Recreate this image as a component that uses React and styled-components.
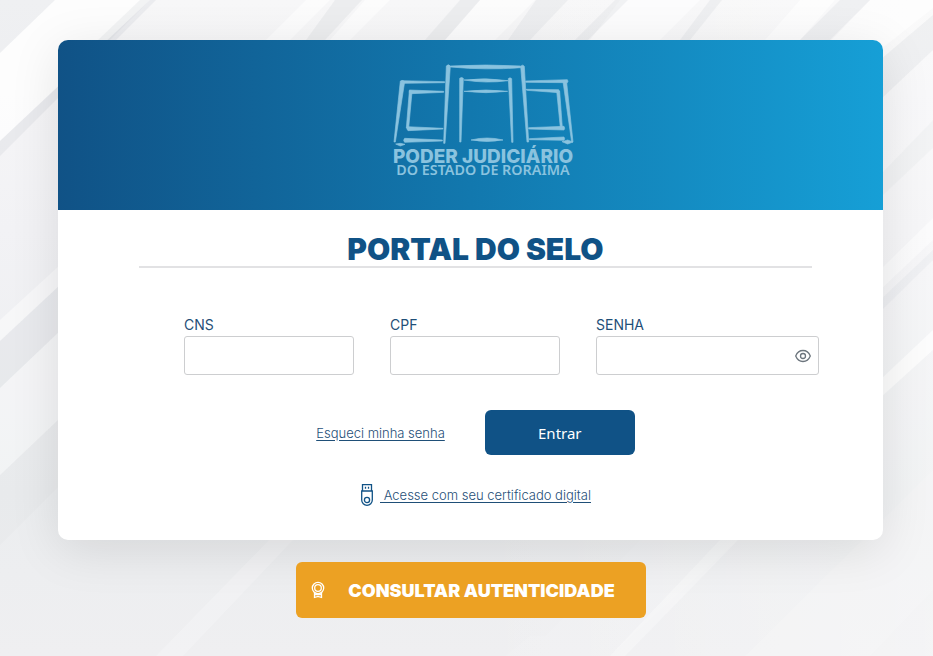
import React, { useState } from "react";
import styled, { createGlobalStyle } from "styled-components";

const NAVY = "#105286";

const GlobalStyle = createGlobalStyle`
  *, *::before, *::after { box-sizing: border-box; }
  body {
    margin: 0;
    background: #eeeff1;
    font-family: Inter, "Open Sans", sans-serif;
  }
`;

const Page = styled.div`
  position: relative;
  isolation: isolate;
  min-height: 100vh;
  padding: 40px 50px 38px 58px;
  display: flex;
  flex-direction: column;
  align-items: center;
  gap: 22px;
`;

const Backdrop = styled.svg`
  position: absolute;
  inset: 0;
  z-index: -1;
  width: 100%;
  height: 100%;
`;

const Card = styled.main`
  width: 100%;
  max-width: 960px;
  border-radius: 10px;
  background: #fff;
  box-shadow: 0 10px 50px rgba(0, 0, 0, 0.1);
`;

const Banner = styled.header`
  height: 170px;
  padding: 24px 0 0 25px;
  display: flex;
  justify-content: center;
  align-items: flex-start;
  border-radius: 10px 10px 0 0;
  background: linear-gradient(90deg, ${NAVY} 0%, #1278ae 50%, #169fd6 100%);
`;

const Logo = styled.svg`
  width: 180px;
  height: 112px;
  overflow: visible;
  fill: #8ac3df;
`;

const Body = styled.div`
  padding: 22px 0 33px 10px;
  display: flex;
  flex-direction: column;
  align-items: center;
`;

const Title = styled.h1`
  width: calc(100% - 142px);
  margin: 0;
  border-bottom: 2px solid #e2e2e4;
  color: ${NAVY};
  font-size: 30px;
  font-weight: 900;
  line-height: 34px;
  text-align: center;
`;

const LoginForm = styled.form`
  width: 100%;
  padding-top: 46px;
  display: flex;
  flex-direction: column;
  align-items: center;
  gap: 35px;
`;

const Fields = styled.div`
  width: 100%;
  padding: 0 64px 0 116px;
  display: grid;
  grid-template-columns: 170fr 170fr 223fr;
  gap: 36px;
`;

const Field = styled.div`
  min-width: 0;
  display: flex;
  flex-direction: column;
`;

const Label = styled.label`
  color: #1f4f78;
  font-size: 14px;
  line-height: 22px;
`;

const InputFrame = styled.div`
  height: 39px;
  display: flex;
  align-items: center;
  border: 1px solid #cdced0;
  border-radius: 3px;
  background: #fff;

  &:focus-within { border-color: ${NAVY}; }
`;

const Input = styled.input`
  flex: 1;
  min-width: 0;
  height: 100%;
  padding: 0 10px;
  border: 0;
  outline: 0;
  background: transparent;
  color: #333;
  font: inherit;
  font-size: 14px;
`;

const RevealButton = styled.button`
  width: 30px;
  height: 30px;
  padding: 0;
  display: grid;
  place-items: center;
  border: 0;
  background: transparent;
  color: #6c757d;
  cursor: pointer;
`;

const Actions = styled.div`
  display: flex;
  align-items: center;
  gap: 40px;
`;

const TextLink = styled.a`
  color: #1f4f78;
  font-size: 13px;
  font-weight: 300;
  line-height: 20px;
  text-underline-offset: 2px;
`;

const SubmitButton = styled.button`
  width: 150px;
  height: 45px;
  border: 0;
  border-radius: 6px;
  background: ${NAVY};
  color: #fff;
  font-family: "Noto Sans", "Open Sans", sans-serif;
  font-size: 15px;
  cursor: pointer;
`;

const CertificateRow = styled.div`
  padding-top: 28px;
  display: flex;
  align-items: center;
  gap: 6px;
  color: ${NAVY};
  white-space: pre;
`;

const VerifyButton = styled.button`
  width: 350px;
  max-width: 100%;
  height: 56px;
  padding: 0 15px;
  display: flex;
  align-items: center;
  border: 0;
  border-radius: 6px;
  background: #eca123;
  color: #fff;
  font-family: inherit;
  font-size: 18px;
  font-weight: 900;
  cursor: pointer;
`;

const VerifyText = styled.span`
  flex: 1;
  padding-left: 8px;
  text-align: center;
`;

function BackdropArt() {
  return (
    <Backdrop viewBox="0 0 933 656" preserveAspectRatio="none" aria-hidden="true">
      <defs>
        <linearGradient id="base" x1="0" y1="0" x2="0" y2="1">
          <stop offset="0" stopColor="#f7f7f8" />
          <stop offset="0.35" stopColor="#f2f2f5" />
          <stop offset="0.75" stopColor="#ebedef" />
          <stop offset="1" stopColor="#efeff1" />
        </linearGradient>
        <linearGradient id="right" x1="0" y1="0" x2="1" y2="0">
          <stop offset="0.5" stopColor="#fff" stopOpacity="0" />
          <stop offset="1" stopColor="#fff" stopOpacity="0.35" />
        </linearGradient>
      </defs>
      <rect width="933" height="656" fill="url(#base)" />
      <rect width="933" height="656" fill="url(#right)" />
      <g fill="#fff">
        <path d="M55 0H150L0 141V53Z" opacity="0.75" />
        <path d="M306 0H330L290 40H266ZM365 0H390L350 40H330Z" opacity="0.6" />
        <path d="M480 0H535L495 40H445ZM620 0H700L660 40H590ZM800 0H835L800 40H765ZM870 0H933V8L880 50H822Z" opacity="0.6" />
        <path d="M0 320L60 265V285L0 341Z" opacity="0.45" />
        <path d="M0 388L60 331V418L0 475Z" opacity="0.35" />
        <path d="M269 540H293L183 656H156Z" opacity="0.22" />
        <path d="M630 540H640L545 636H530L505 656H610L738 540Z" opacity="0.08" />
        <path d="M720 540H738L625 656H610Z" opacity="0.3" />
        <path d="M933 330V350L880 398V380Z" opacity="0.7" />
        <path d="M933 218V240L880 290V270Z" opacity="0.5" />
        <path d="M933 470L745 656H870L933 590Z" opacity="0.15" />
      </g>
      <g fill="#c9ccd2">
        <path d="M0 0H55L0 53Z" opacity="0.16" />
        <path d="M0 141L150 0H156L0 156Z" opacity="0.25" />
        <path d="M140 0H150L110 40H98Z" opacity="0.2" />
        <path d="M335 0H362L325 40H306ZM460 0H480L445 40H425Z" opacity="0.22" />
        <path d="M536 0H568L530 40H508ZM615 0H628L588 40H575ZM710 0H722L690 40H680ZM840 0H870L830 40H800Z" opacity="0.2" />
        <path d="M933 15V50L880 100V60Z" opacity="0.2" />
        <path d="M933 120V148L880 198V175Z" opacity="0.1" />
        <path d="M0 341L60 285V331L0 388Z" opacity="0.18" />
        <path d="M933 250V260L880 312V300Z" opacity="0.14" />
        <path d="M0 475L60 418V485L0 545Z" opacity="0.08" />
      </g>
    </Backdrop>
  );
}

function CourtLogo() {
  return (
    <Logo viewBox="39 40 540 336" role="img" aria-label="Poder Judiciário do Estado de Roraima">
      <g stroke="#8ac3df" strokeWidth="2" strokeLinejoin="round">
        <path d="M199 46Q205 39 211 46L195 278H191Z" />
        <path d="M422 47Q428 40 433 47L446 274H441Z" />
        <path d="M211 46Q320 40 422 46V51Q320 59 211 49Z" />
        <path d="M61 91Q68 87 74 93L46 274H42Z" />
        <path d="M65 90L194 93V96L74 98L65 96Z" />
        <path d="M88 121L96 124L86 232H79Z" />
        <path d="M88 118L191 122V125L94 129L88 126Z" />
        <path d="M82 228L189 233V235L84 240Q78 235 82 228Z" />
        <path d="M74 263L187 268V271L74 275Q68 269 74 263Z" />
        <path d="M47 280L61 278L75 281L61 286Z" />
        <path d="M239 83Q245 78 250 83L243 274H239Z" />
        <path d="M385 84Q390 79 395 84L399 275H395Z" />
        <path d="M252 88Q318 80 384 90Q318 99 252 88Z" />
        <path d="M252 122Q318 114 383 122Q318 130 252 122Z" />
        <path d="M273 268Q322 256 369 268Q322 277 273 268Z" />
        <path d="M437 91L562 87Q566 92 562 96L437 95Z" />
        <path d="M549 93L560 95L579 274H575Z" />
        <path d="M437 116L536 117Q541 122 536 126L441 119Z" />
        <path d="M530 121L539 122L547 231H541Z" />
        <path d="M446 231L552 227Q556 233 552 238L446 235Z" />
        <path d="M448 264L552 259Q556 265 552 269L448 267Z" />
        <path d="M546 273L563 268L579 274L563 280Z" />
      </g>
      <text x="309" y="336" textAnchor="middle" fontFamily="Inter, sans-serif" fontSize="57" fontWeight="800">PODER JUDICIÁRIO</text>
      <text x="309" y="372" textAnchor="middle" fontFamily="Noto Sans, Open Sans, sans-serif" fontSize="43" fontWeight="600">DO ESTADO DE RORAIMA</text>
    </Logo>
  );
}

function EyeIcon() {
  return (
    <svg width="16" height="16" viewBox="0 0 16 16" fill="none" stroke="currentColor" strokeWidth="1.3" aria-hidden="true">
      <path d="M.7 8C2.2 4.300 4.800 2.500 8 2.500S13.800 4.300 15.300 8C13.800 11.700 11.200 13.500 8 13.500S2.200 11.700.7 8Z" />
      <circle cx="8" cy="8" r="2.500" />
    </svg>
  );
}

function TokenIcon() {
  return (
    <svg width="14" height="24" viewBox="0 0 14 24" fill="none" stroke="currentColor" strokeWidth="1.300" aria-hidden="true">
      <path d="M2.500 8V1.700H11.500V8M1.700 8H12.300V17A5.300 5.300 0 0 1 1.700 17Z" />
      <circle cx="7" cy="17" r="2.600" />
      <path d="M5.500 3.800V5.800M8.500 3.800V5.800" />
    </svg>
  );
}

function SealIcon() {
  return (
    <svg width="14" height="18" viewBox="0 0 14 18" fill="none" stroke="currentColor" strokeWidth="1.300" aria-hidden="true">
      <circle cx="7" cy="7" r="5.700" />
      <circle cx="7" cy="7" r="3.300" />
      <path d="M3.500 11.500V16.500L7 15.500L10.500 16.500V11.500M3.500 13.500H10.500" />
    </svg>
  );
}

export default function App() {
  const [revealed, setRevealed] = useState(false);
  return (
    <>
      <GlobalStyle />
      <Page>
        <BackdropArt />
        <Card>
          <Banner>
            <CourtLogo />
          </Banner>
          <Body>
            <Title>PORTAL DO SELO</Title>
            <LoginForm onSubmit={(e) => e.preventDefault()}>
              <Fields>
                <Field>
                  <Label htmlFor="cns">CNS</Label>
                  <InputFrame><Input id="cns" type="text" /></InputFrame>
                </Field>
                <Field>
                  <Label htmlFor="cpf">CPF</Label>
                  <InputFrame><Input id="cpf" type="text" /></InputFrame>
                </Field>
                <Field>
                  <Label htmlFor="senha">SENHA</Label>
                  <InputFrame>
                    <Input id="senha" type={revealed ? "text" : "password"} />
                    <RevealButton type="button" aria-label="Mostrar senha" onClick={() => setRevealed(!revealed)}>
                      <EyeIcon />
                    </RevealButton>
                  </InputFrame>
                </Field>
              </Fields>
              <Actions>
                <TextLink href="#recuperar">Esqueci minha senha</TextLink>
                <SubmitButton type="submit">Entrar</SubmitButton>
              </Actions>
            </LoginForm>
            <CertificateRow>
              <TokenIcon />
              <TextLink href="#certificado">{" Acesse com seu certificado digital"}</TextLink>
            </CertificateRow>
          </Body>
        </Card>
        <VerifyButton type="button">
          <SealIcon />
          <VerifyText>CONSULTAR AUTENTICIDADE</VerifyText>
        </VerifyButton>
      </Page>
    </>
  );
}
